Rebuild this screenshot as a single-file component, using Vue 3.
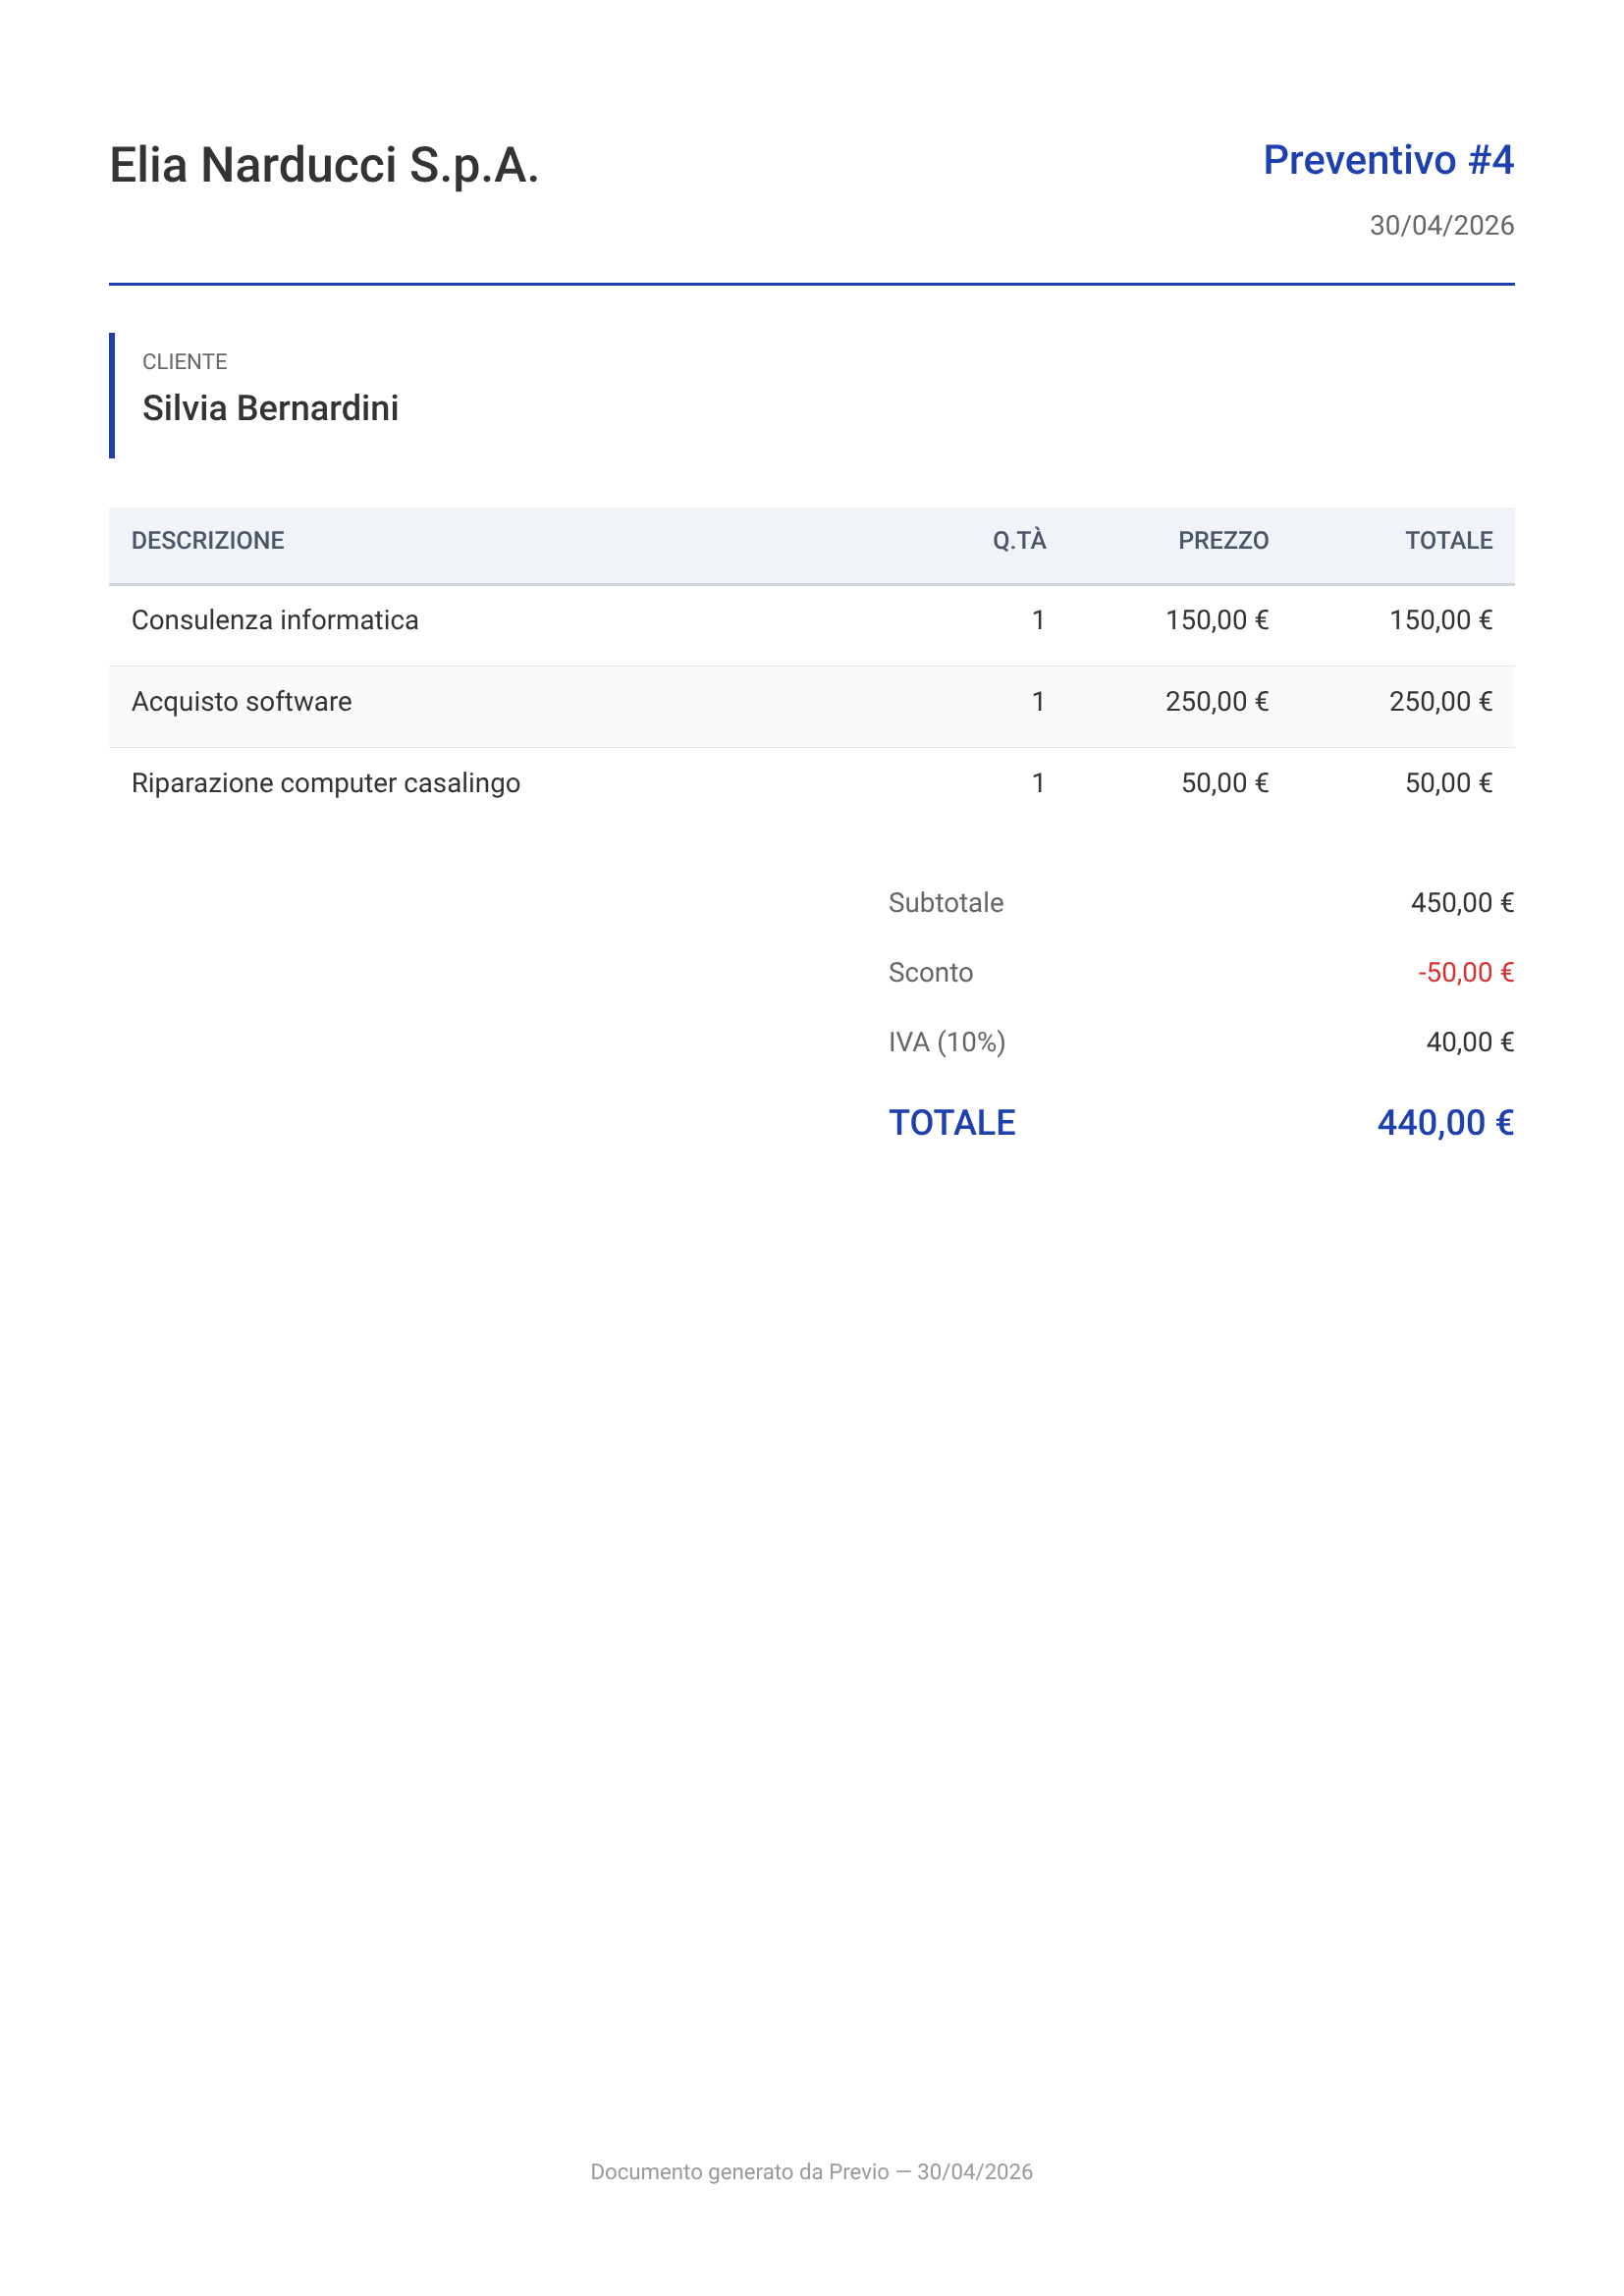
<script setup>
const rows = [
  { desc: 'Consulenza informatica', qty: 1, price: '150,00 €', total: '150,00 €' },
  { desc: 'Acquisto software', qty: 1, price: '250,00 €', total: '250,00 €' },
  { desc: 'Riparazione computer casalingo', qty: 1, price: '50,00 €', total: '50,00 €' }
]
const totals = [
  { label: 'Subtotale', value: '450,00 €' },
  { label: 'Sconto', value: '-50,00 €', neg: true },
  { label: 'IVA (10%)', value: '40,00 €' }
]
</script>

<template>
  <div class="page">
    <header class="head">
      <h1 class="company">Elia Narducci S.p.A.</h1>
      <div class="doc">
        <div class="doc-title">Preventivo #4</div>
        <div class="doc-date">30/04/2026</div>
      </div>
    </header>

    <section class="client">
      <div class="client-label">CLIENTE</div>
      <div class="client-name">Silvia Bernardini</div>
    </section>

    <table class="items">
      <thead>
        <tr>
          <th class="c-desc">DESCRIZIONE</th>
          <th class="c-qty">Q.TÀ</th>
          <th class="c-price">PREZZO</th>
          <th class="c-total">TOTALE</th>
        </tr>
      </thead>
      <tbody>
        <tr v-for="r in rows" :key="r.desc">
          <td class="c-desc">{{ r.desc }}</td>
          <td class="c-qty">{{ r.qty }}</td>
          <td class="c-price">{{ r.price }}</td>
          <td class="c-total">{{ r.total }}</td>
        </tr>
      </tbody>
    </table>

    <section class="totals">
      <div v-for="t in totals" :key="t.label" class="t-row">
        <span class="t-label">{{ t.label }}</span>
        <span class="t-value" :class="{ neg: t.neg }">{{ t.value }}</span>
      </div>
      <div class="t-grand">
        <span>TOTALE</span>
        <span>440,00 €</span>
      </div>
    </section>

    <footer class="foot">Documento generato da Previo — 30/04/2026</footer>
  </div>
</template>

<style>
html, body { margin: 0; background: #fff; }
</style>

<style scoped>
.page {
  box-sizing: border-box;
  width: 1654px;
  height: 2339px;
  padding: 111px 111px 0 111px;
  font-family: Roboto, "Liberation Sans", sans-serif;
  text-rendering: geometricPrecision;
  will-change: transform;
  color: #333;
  display: flex;
  flex-direction: column;
}
.head {
  display: flex;
  justify-content: space-between;
  align-items: flex-start;
  height: 177px;
  border-bottom: 3px solid #1e40af;
}
.company {
  margin: 0;
  font-size: 50px;
  font-weight: 500;
  line-height: 58px;
  padding-top: 29px;
  color: #333;
}
.doc { text-align: right; padding-top: 28px; }
.doc-title {
  font-size: 41.67px;
  font-weight: 500;
  line-height: 50px;
  color: #1e40af;
}
.doc-date {
  font-size: 27.77px;
  line-height: 34px;
  margin-top: 24px;
  color: #666;
}
.client {
  margin-top: 48px;
  height: 128px;
  box-sizing: border-box;
  border-left: 6px solid #1e40af;
  padding: 17px 0 0 28px;
}
.client-label {
  font-size: 22.22px;
  line-height: 27px;
  color: #666;
}
.client-name {
  margin-top: 12px;
  font-size: 36.11px;
  font-weight: 500;
  line-height: 42px;
  color: #333;
}
.items {
  margin-top: 50px;
  width: 100%;
  border-collapse: separate;
  border-spacing: 0;
  table-layout: fixed;
}
.items th {
  height: 80px;
  padding: 20px 22px 0;
  box-sizing: border-box;
  background: #f0f4f8;
  border-bottom: 3px solid #d1d5db;
  font-size: 25px;
  font-weight: 500;
  color: #4a5568;
  vertical-align: top;
  line-height: 30px;
}
.items td {
  height: 82.4px;
  padding: 18px 22px 0;
  box-sizing: border-box;
  font-size: 27.77px;
  line-height: 34px;
  vertical-align: top;
  border-bottom: 1px solid #e5e7eb;
  color: #333;
}
.items tbody tr:nth-child(even) td { background: #f9fafc; padding-top: 19px; }
.items tbody tr:last-child td { border-bottom: none; padding-top: 19px; }
.items .c-desc { text-align: left; padding-left: 22.7px; }
.c-qty { text-align: right; width: 200px; }
.c-price { text-align: right; width: 227px; }
.c-total { text-align: right; width: 228px; }
.totals {
  margin-top: 59px;
  margin-left: auto;
  width: 638px;
}
.t-row {
  display: flex;
  justify-content: space-between;
  font-size: 27.77px;
  line-height: 34px;
  margin-bottom: 36.7px;
}
.t-label { color: #666; }
.t-value { color: #333; }
.t-value.neg { color: #dc3030; }
.t-grand {
  display: flex;
  justify-content: space-between;
  font-size: 36.11px;
  font-weight: 500;
  line-height: 44px;
  color: #1e40af;
  margin-top: 43px;
}
.foot {
  margin-top: auto;
  margin-bottom: 112px;
  text-align: center;
  font-size: 22.22px;
  line-height: 27px;
  color: #999;
}
</style>
